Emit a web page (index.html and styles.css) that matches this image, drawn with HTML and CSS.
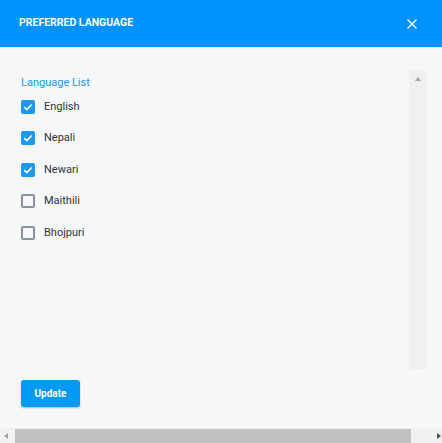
FILE: index.html
```html
<!DOCTYPE html>
<html>
<head>
<meta charset="utf-8">
<link rel="stylesheet" href="styles.css">
</head>
<body>
<div class="dialog">
  <header class="header">
    <span class="title">PREFERRED LANGUAGE</span>
    <svg class="close" width="10" height="10" viewBox="0 0 10 10"><path d="M0.5 0.5L9.5 9.5M9.5 0.5L0.5 9.5" stroke="#fff" stroke-width="1.4" fill="none"/></svg>
  </header>
  <main class="main">
    <div class="scroll">
      <div class="list">
        <div class="label">Language List</div>
        <label class="row"><span class="box checked"><svg width="14" height="14" viewBox="0 0 14 14"><path d="M3.3 7.1L5.8 9.6L10.7 4.6" stroke="#fff" stroke-width="1.5" fill="none"/></svg></span><span class="name">English</span></label>
        <label class="row"><span class="box checked"><svg width="14" height="14" viewBox="0 0 14 14"><path d="M3.3 7.1L5.8 9.6L10.7 4.6" stroke="#fff" stroke-width="1.5" fill="none"/></svg></span><span class="name">Nepali</span></label>
        <label class="row"><span class="box checked"><svg width="14" height="14" viewBox="0 0 14 14"><path d="M3.3 7.1L5.8 9.6L10.7 4.6" stroke="#fff" stroke-width="1.5" fill="none"/></svg></span><span class="name">Newari</span></label>
        <label class="row"><span class="box"></span><span class="name">Maithili</span></label>
        <label class="row"><span class="box"></span><span class="name">Bhojpuri</span></label>
      </div>
      <div class="vbar"><span class="up"></span></div>
    </div>
    <div class="footer"><button class="btn">Update</button></div>
  </main>
  <div class="hbar">
    <span class="arrow-left"></span>
    <span class="thumb"></span>
    <span class="arrow-right"></span>
  </div>
</div>
</body>
</html>
```
FILE: styles.css
```css
* { box-sizing: border-box; }
html, body { margin: 0; padding: 0; }
body {
  width: 442px;
  height: 443px;
  overflow: hidden;
  background: #f6f7f9;
  font-family: Roboto, "Liberation Sans", sans-serif;
}
.dialog {
  display: flex;
  flex-direction: column;
  height: 443px;
}
.header {
  height: 47px;
  background: #0093ff;
  display: flex;
  align-items: center;
  justify-content: space-between;
  padding: 0 25px 0 19px;
  flex: none;
}
.title {
  color: #fff;
  font-weight: 700;
  font-size: 10.5px;
  margin-top: -2px;
}
.close { display: block; }
.main {
  flex: 1;
  display: flex;
  flex-direction: column;
  padding-top: 23px;
}
.scroll {
  display: flex;
  height: 299px;
}
.list {
  flex: 1;
  padding: 6px 0 0 21px;
}
.label {
  color: #2196f3;
  font-size: 11px;
  line-height: 14px;
  margin-bottom: 1px;
}
.row {
  display: flex;
  align-items: center;
  height: 31.5px;
}
.box {
  width: 14px;
  height: 14px;
  border: 2px solid #8a929d;
  border-radius: 2px;
  margin-right: 9px;
  position: relative;
  flex: none;
}
.box.checked {
  background: #1c98f0;
  border-color: #1c98f0;
}
.box svg { position: absolute; left: -2px; top: -2px; }
.name {
  font-size: 11px;
  color: #2e3440;
  margin-top: -1px;
}
.vbar {
  width: 17px;
  margin-right: 16px;
  background: #f0f0f0;
  display: flex;
  justify-content: center;
  padding-top: 7px;
}
.up {
  width: 0;
  height: 0;
  border-left: 3.5px solid transparent;
  border-right: 3.5px solid transparent;
  border-bottom: 4px solid #a3a3a3;
}
.footer {
  padding: 11px 0 0 21px;
}
.btn {
  width: 59px;
  height: 27px;
  border: none;
  border-radius: 3px;
  background: #0099f5;
  color: #fff;
  font-family: Roboto, "Liberation Sans", sans-serif;
  font-weight: 700;
  font-size: 10px;
  box-shadow: 0 1px 2px rgba(0,0,0,0.25);
  padding: 0;
}
.hbar {
  height: 15px;
  background: #f1f1f1;
  display: flex;
  align-items: center;
  flex: none;
}
.arrow-left {
  width: 0; height: 0;
  margin-left: 4px;
  border-top: 3.5px solid transparent;
  border-bottom: 3.5px solid transparent;
  border-right: 4px solid #a3a3a3;
}
.thumb {
  height: 14px;
  margin-left: 7px;
  width: 396px;
  background: #c1c1c1;
  align-self: flex-end;
}
.arrow-right {
  width: 0; height: 0;
  margin-left: 26px;
  border-top: 3.5px solid transparent;
  border-bottom: 3.5px solid transparent;
  border-left: 4px solid #505050;
}
```
